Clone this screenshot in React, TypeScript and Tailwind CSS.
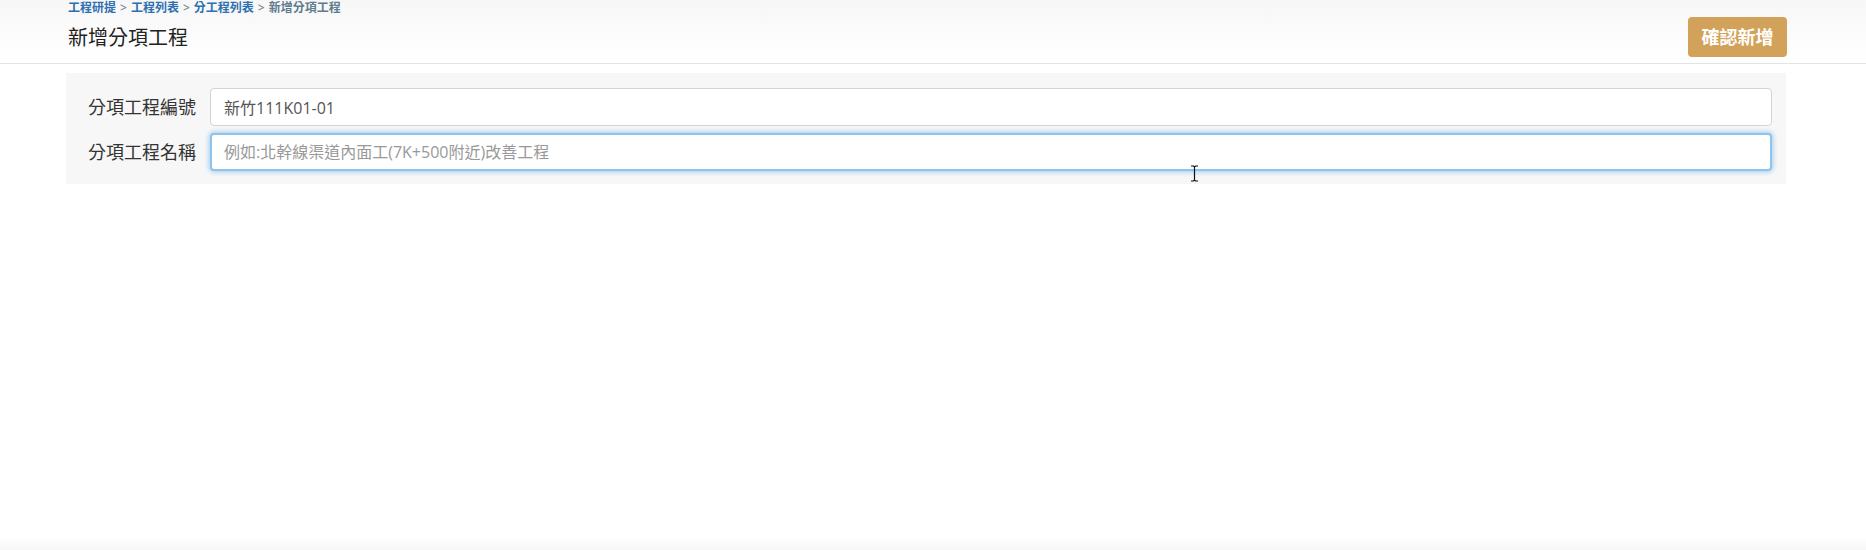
import { useState } from "react";

const FONT = { fontFamily: '"Open Sans", "Noto Sans CJK TC", sans-serif' };

const crumbs = ["工程研提", "工程列表", "分工程列表"];

export default function App() {
  const [code, setCode] = useState("新竹111K01-01");
  const [name, setName] = useState("");

  return (
    <div className="relative h-[550px] w-full overflow-hidden bg-white text-[#333]" style={FONT}>
      {/* header */}
      <div className="h-[64px] border-b border-[#e3e3e3] bg-gradient-to-b from-[#f7f7f7] to-white pl-[68px] pr-[79px]">
        <div className="flex h-full items-start justify-between">
          <div>
            <div className="flex h-[16px] items-center gap-[4px] text-[12px] font-semibold leading-none">
              {crumbs.map((c) => (
                <span key={c} className="flex items-center gap-[4px]">
                  <a className="text-[#2d6fb0]">{c}</a>
                  <span className="text-[#7b8d99]">&gt;</span>
                </span>
              ))}
              <span className="text-[#5f7c8e]">新增分項工程</span>
            </div>
            <h1 className="mt-[10px] text-[20px] leading-[24px] text-[#222]">新增分項工程</h1>
          </div>
          <button className="mt-[17px] h-[40px] w-[99px] rounded-[4px] bg-[#d3a25a] text-[18px] font-bold text-white">
            確認新增
          </button>
        </div>
      </div>

      {/* form panel */}
      <div className="pl-[66px] pr-[80px] pt-[9px]">
        <div className="flex flex-col gap-[7px] bg-[#f7f7f7] pb-[13px] pl-[22px] pr-[14px] pt-[15px]">
          <div className="flex items-center">
            <label className="w-[122px] shrink-0 text-[18px] text-[#333]">分項工程編號</label>
            <input
              value={code}
              onChange={(e) => setCode(e.target.value)}
              className="h-[38px] flex-1 rounded-[4px] border border-[#d4d4d4] bg-white px-[13px] text-[16px] text-[#555] outline-none"
            />
          </div>
          <div className="flex items-center">
            <label className="w-[122px] shrink-0 text-[18px] text-[#333]">分項工程名稱</label>
            <input
              autoFocus
              value={name}
              onChange={(e) => setName(e.target.value)}
              placeholder="例如:北幹線渠道內面工(7K+500附近)改善工程"
              className="h-[38px] flex-1 rounded-[4px] border-2 border-[#8cc3ef] bg-white px-[12px] text-[16px] text-[#555] shadow-[0_0_5px_1px_rgba(102,175,233,0.6)] outline-none placeholder:text-[#999]"
            />
          </div>
        </div>
      </div>

      {/* mouse I-beam over the focused field */}
      <svg className="absolute left-[1190px] top-[165px]" width="9" height="17" viewBox="0 0 9 17">
        <path d="M1 1h2.5L4.5 2 5.5 1H8M4.5 2v13M1 16h2.5l1-1 1 1H8" fill="none" stroke="#111" strokeWidth="1.2" />
      </svg>

      <div className="absolute bottom-0 left-0 h-[12px] w-full bg-gradient-to-b from-white to-[#f6f6f6]" />
    </div>
  );
}
